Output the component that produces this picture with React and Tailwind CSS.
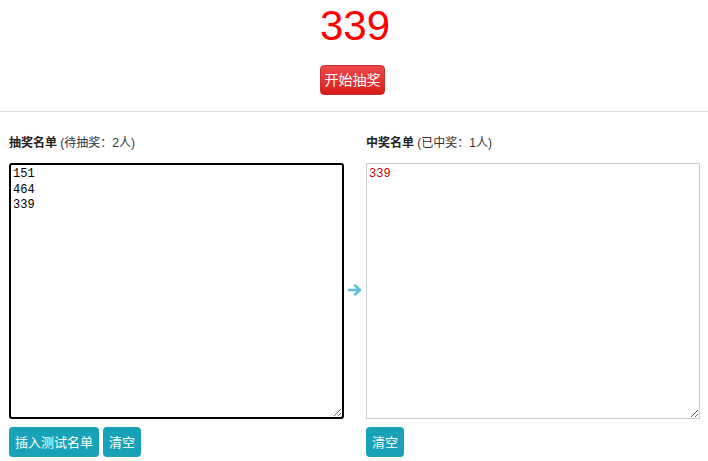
import React, { useState } from 'react';

const font = { fontFamily: '"Liberation Sans", "Noto Sans CJK SC", sans-serif' };

function App() {
  const [pool, setPool] = useState('151\n464\n339');
  const [winners, setWinners] = useState('339');

  const btn =
    'h-[30px] px-[6px] rounded-[4px] bg-[#17a2b8] text-white text-[13px] leading-none';

  return (
    <div className="w-[708px] h-[461px] bg-white text-[#333] overflow-hidden" style={font}>
      <div className="flex flex-col items-center pt-[4px]">
        <div className="text-[42px] leading-[44px] text-[#ff0000] pl-[2px]">339</div>
        <button className="mt-[17px] h-[30px] w-[65px] mr-[3px] rounded-[4px] border border-[#c9302c] bg-gradient-to-b from-[#f0484a] to-[#d9181a] text-white text-[14px] leading-none">
          开始抽奖
        </button>
      </div>

      <div className="mt-[16px] border-t border-[#dddddd]" />

      <div className="flex pl-[9px] pr-[8px] pt-[23px]">
        <div className="w-[335px] flex flex-col">
          <div className="text-[12px] leading-[16px] h-[16px]">
            <span className="font-bold text-[#222]">抽奖名单</span>{' '}
            <span className="text-[#333]">(待抽奖：2人)</span>
          </div>
          <textarea
            value={pool}
            onChange={(e) => setPool(e.target.value)}
            className="mt-[12px] h-[256px] w-full resize-y rounded-[3px] border-2 border-black px-[2px] py-[2px] text-[12px] leading-[15.5px] text-black outline-none"
            style={{ fontFamily: '"Liberation Mono", monospace' }}
          />
          <div className="mt-[8px] flex gap-[4px]">
            <button className={btn}>插入测试名单</button>
            <button className={btn}>清空</button>
          </div>
        </div>

        <div className="w-[22px] flex items-center justify-center pt-[28px] pb-[40px]">
          <svg width="14" height="12" viewBox="0 0 14 12">
            <path d="M1 6h10M7 1.5l5 4.5-5 4.5" fill="none" stroke="#5bc0de" strokeWidth="2.5" strokeLinecap="round" strokeLinejoin="round" />
          </svg>
        </div>

        <div className="w-[334px] flex flex-col">
          <div className="text-[12px] leading-[16px] h-[16px]">
            <span className="font-bold text-[#222]">中奖名单</span>{' '}
            <span className="text-[#333]">(已中奖：1人)</span>
          </div>
          <textarea
            value={winners}
            onChange={(e) => setWinners(e.target.value)}
            className="mt-[12px] h-[256px] w-full resize-y border border-[#cccccc] px-[2px] py-[3px] text-[12px] leading-[15.5px] text-[#cc0000] outline-none"
            style={{ fontFamily: '"Liberation Mono", monospace' }}
          />
          <div className="mt-[8px] flex gap-[4px]">
            <button className={btn} onClick={() => setWinners('')}>清空</button>
          </div>
        </div>
      </div>
    </div>
  );
}

export default App;
